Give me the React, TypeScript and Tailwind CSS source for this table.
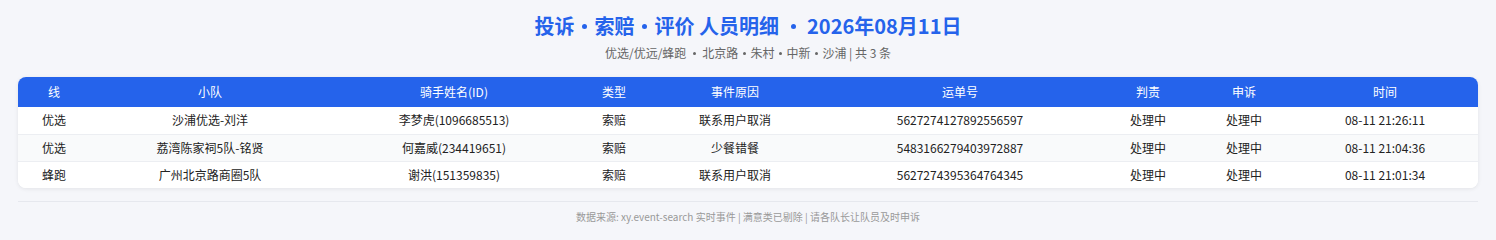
import React from "react";

const cols = [
  { h: "线", w: 72 },
  { h: "小队", w: 240 },
  { h: "骑手姓名(ID)", w: 248 },
  { h: "类型", w: 72 },
  { h: "事件原因", w: 170 },
  { h: "运单号", w: 280 },
  { h: "判责", w: 96 },
  { h: "申诉", w: 96 },
  { h: "时间", w: 186 },
];

const rows = [
  ["优选", "沙浦优选-刘洋", "李梦虎(1096685513)", "索赔", "联系用户取消", "5627274127892556597", "处理中", "处理中", "08-11 21:26:11"],
  ["优选", "荔湾陈家祠5队-铭贤", "何嘉威(234419651)", "索赔", "少餐错餐", "5483166279403972887", "处理中", "处理中", "08-11 21:04:36"],
  ["蜂跑", "广州北京路商圈5队", "谢洪(151359835)", "索赔", "联系用户取消", "5627274395364764345", "处理中", "处理中", "08-11 21:01:34"],
];

function TDot({ w }: { w: string }) {
  return (
    <span className={`${w} flex justify-center items-center`}>
      <span className="block w-[5px] h-[5px] rounded-full bg-[#2563eb]" />
    </span>
  );
}

function SDot({ w }: { w: string }) {
  return (
    <span className={`${w} flex justify-center items-center`}>
      <span className="block w-[3px] h-[3px] rounded-full bg-[#666]" />
    </span>
  );
}

export default function App() {
  return (
    <div
      className="w-[1496px] h-[240px] bg-[#f5f6fa] px-[18px] pt-[11px]"
      style={{ fontFamily: '"Noto Sans CJK SC", sans-serif' }}
    >
      <h1 className="flex justify-center items-center text-[20px] leading-[30px] font-bold text-[#2563eb] whitespace-pre">
        <span>投诉</span>
        <TDot w="w-[20px]" />
        <span>索赔</span>
        <TDot w="w-[20px]" />
        <span>评价 人员明细</span>
        <TDot w="w-[28px]" />
        <span>2026年08月11日</span>
      </h1>
      <div className="flex justify-center items-center text-[12px] leading-[20px] text-[#666] mt-[2px] whitespace-pre">
        <span>优选/优远/蜂跑</span>
        <SDot w="w-[16px]" />
        <span>北京路</span>
        <SDot w="w-[12px]" />
        <span>朱村</span>
        <SDot w="w-[12px]" />
        <span>中新</span>
        <SDot w="w-[12px]" />
        <span>沙浦 | 共 3 条</span>
      </div>
      <div className="mt-[14px] rounded-[8px] overflow-hidden bg-white shadow-[0_1px_4px_rgba(0,0,0,0.08)]">
        <table className="w-full table-fixed border-collapse text-[12px]">
          <colgroup>
            {cols.map((c, i) => (
              <col key={i} style={{ width: c.w }} />
            ))}
          </colgroup>
          <thead>
            <tr className="bg-[#2563eb] text-white h-[30px]">
              {cols.map((c, i) => (
                <th key={i} className="font-normal text-center">
                  {c.h}
                </th>
              ))}
            </tr>
          </thead>
          <tbody>
            {rows.map((r, ri) => (
              <tr
                key={ri}
                className={`h-[27px] text-[#222] ${ri === 1 ? "bg-[#f9fafb]" : "bg-white"} ${ri < rows.length - 1 ? "border-b border-[#eceef2]" : ""}`}
              >
                {r.map((v, ci) => (
                  <td key={ci} className="text-center">
                    {v}
                  </td>
                ))}
              </tr>
            ))}
          </tbody>
        </table>
      </div>
      <div className="mt-[13px] border-t border-[#e6e8ee] pt-[7px] text-center text-[10px] leading-[16px] text-[#999]">
        数据来源: xy.event-search 实时事件 | 满意类已剔除 | 请各队长让队员及时申诉
      </div>
    </div>
  );
}
